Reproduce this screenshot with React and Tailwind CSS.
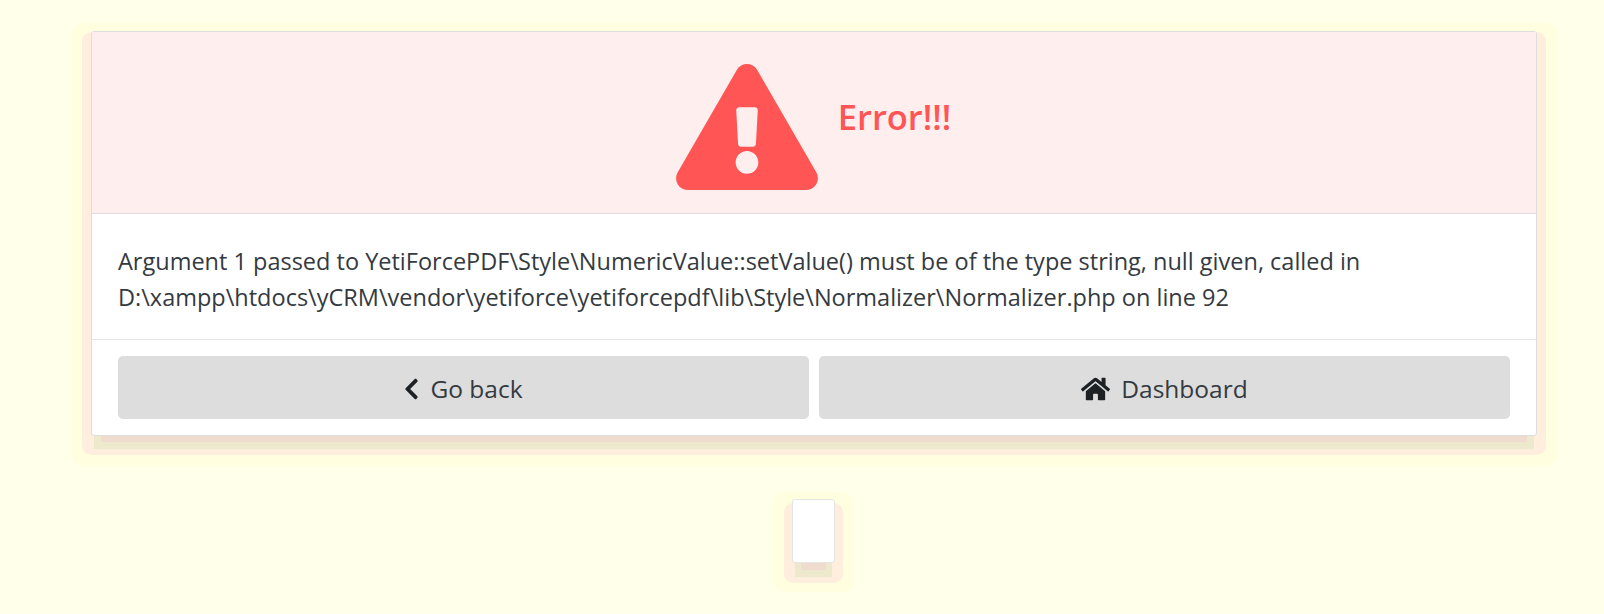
import { FaExclamationTriangle, FaChevronLeft, FaHome } from "react-icons/fa";

const font = "font-['Open_Sans','Noto_Sans',sans-serif]";

export default function App() {
  return (
    <div className={`h-[614px] overflow-hidden bg-[#ffffea] pt-[31px] pl-[91px] text-[#343a40] ${font}`}>
      {/* Error card */}
      <div className="w-[1446px] rounded-[3px] border border-[#dddddd] bg-white shadow-[0_16px_0_-10px_#efdccf,0_16px_0_-3px_#ece9cd,0_10px_0_9px_#ffeedd,0_11px_0_19px_#ffffe0]">
        <div className="flex h-[182px] items-center justify-center gap-[20px] border-b border-[#e3dde3] bg-[#ffeeee] pr-[1px]">
          <FaExclamationTriangle className="mt-[8px] h-[126px] w-[142px] text-[#ff5555]" />
          <h4 className="mb-[11px] text-[34.5px] leading-[42px] font-semibold text-[#ff5555]">Error!!!</h4>
        </div>
        <div className="h-[126px] border-b border-[#e5e5e5] px-[26px] pt-[29px] text-[23.5px] leading-[36px]">
          <p>
            Argument 1 passed to YetiForcePDF\Style\NumericValue::setValue() must be of the type string, null given, called in
            <br />
            D:\xampp\htdocs\yCRM\vendor\yetiforce\yetiforcepdf\lib\Style\Normalizer\Normalizer.php on line 92
          </p>
        </div>
        <div className="flex gap-[10px] px-[26px] py-[16px] text-[24.5px]">
          <button className="flex h-[63px] flex-1 items-center justify-center gap-[11px] rounded-[5px] bg-[#dddddd] pt-[3px]">
            <FaChevronLeft className="h-[24px] w-[15px] text-[#1d2124]" />
            <span>Go back</span>
          </button>
          <button className="flex h-[63px] flex-1 items-center justify-center gap-[11px] rounded-[5px] bg-[#dddddd] pt-[3px]">
            <FaHome className="h-[26px] w-[29px] text-[#1d2124]" />
            <span>Dashboard</span>
          </button>
        </div>
      </div>

      {/* Empty white box below the card */}
      <div className="mt-[63px] ml-[701px] h-[64px] w-[43px] rounded-[3px] border border-[#e5e5e5] bg-white shadow-[0_16px_0_-9px_#efdccf,0_17px_0_-3px_#ece9cd,0_12px_0_8px_#ffeedd,0_11px_0_18px_#ffffe0]" />
    </div>
  );
}
